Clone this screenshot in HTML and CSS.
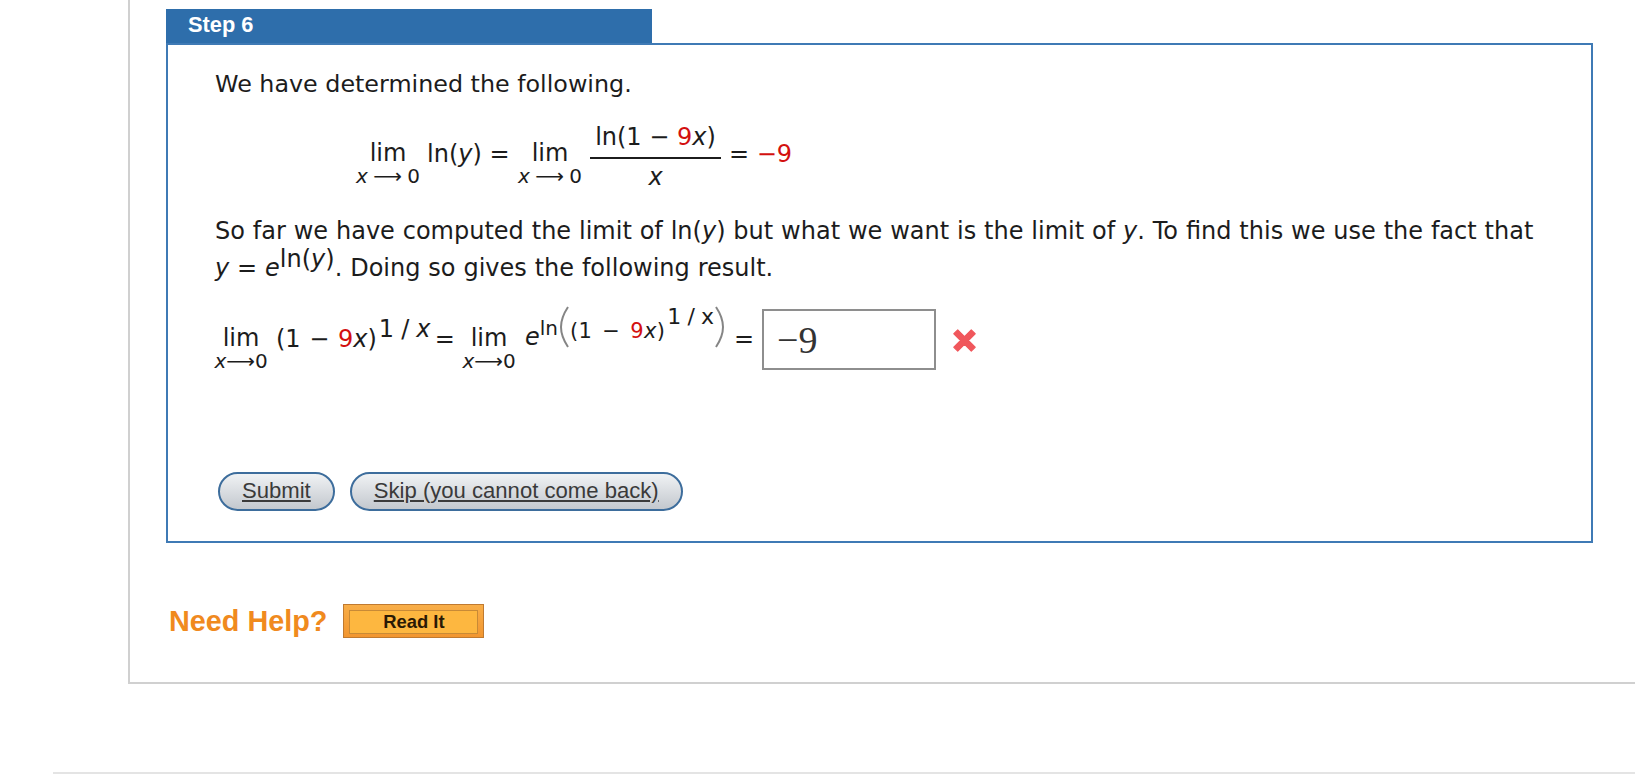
FILE: index.html
```html
<!DOCTYPE html>
<html lang="en">
<head>
<meta charset="utf-8">
<title>Step 6</title>
<link rel="stylesheet" href="styles.css">
</head>
<body>
<main class="panel">
  <section class="step">
    <h2 class="step-tab">Step 6</h2>
    <div class="step-box">
      <p class="line first">We have determined the following.</p>
      <div class="eq eq-one">
        <span class="lim lim-wide"><span>lim</span><span class="sub"><i>x</i> ⟶ 0</span></span>
        <span class="t t1">ln(<i>y</i>) =</span>
        <span class="lim lim-wide"><span>lim</span><span class="sub"><i>x</i> ⟶ 0</span></span>
        <span class="frac"><span class="num">ln(1 − <b class="red">9</b><i>x</i>)</span><span class="den"><i>x</i></span></span>
        <span class="t t2">= <b class="red">−9</b></span>
      </div>
      <p class="line para">So far we have computed the limit of ln(<i>y</i>) but what we want is the limit of <i>y</i>. To find this we use the fact that<br><i>y</i> = <i>e</i><sup class="sup">ln(<i>y</i>)</sup>. Doing so gives the following result.</p>
      <div class="eq eq-two">
        <span class="lim lim-tight"><span>lim</span><span class="sub"><i>x</i>⟶0</span></span>
        <span class="t t3">(1 − <b class="red">9</b><i>x</i>)<sup class="sup2">1 / <i>x</i></sup>=</span>
        <span class="lim lim-tight"><span>lim</span><span class="sub"><i>x</i>⟶0</span></span>
        <span class="t t4"><i>e</i><sup class="sup3">ln<svg class="paren" viewBox="0 0 10 42" preserveAspectRatio="none"><path d="M9 1C3 10 2 16 2 21s1 11 7 20"/></svg><span class="inner">(1 − <b class="red">9</b><i>x</i>)<sup class="sup4">1 / x</sup></span><svg class="paren" viewBox="0 0 10 42" preserveAspectRatio="none"><path d="M1 1c6 9 7 15 7 20s-1 11-7 20"/></svg></sup></span>
        <span class="t t5">=</span>
        <span class="answer">−9</span>
        <svg class="cross" viewBox="0 0 24 24" role="img" aria-label="Incorrect"><path d="M2.500 6 6 2.500l6 6 6-6L21.500 6l-6 6 6 6-3.500 3.500-6-6-6 6L2.500 18l6-6z"/></svg>
      </div>
      <div class="actions">
        <a class="btn" href="#">Submit</a>
        <a class="btn" href="#">Skip (you cannot come back)</a>
      </div>
    </div>
  </section>
  <div class="help">
    <span class="need">Need Help?</span>
    <a class="read" href="#"><span>Read It</span></a>
  </div>
</main>
<div class="foot"></div>
</body>
</html>
```
FILE: styles.css
```css
html, body { margin: 0; padding: 0; background: #fff; height: 774px; overflow: hidden; }
body { font-family: "DejaVu Sans", Verdana, sans-serif; color: #1c1c1c; }
i { font-style: italic; }
.red { color: #d3100f; font-weight: normal; }
.panel { margin-left: 128px; height: 673px; padding: 9px 0 0 36px; border-left: 2px solid #d0d0d0; border-bottom: 2px solid #d0d0d0; }
.foot { margin: 88px 0 0 53px; border-top: 2px solid #e4e4e4; }
.step-tab { margin: 0; width: 464px; height: 35px; padding-left: 22px; background: #2e6eab; color: #fff; font: bold 21.8px/32px "Liberation Sans", Arial, sans-serif; }
.step-box { height: 496px; border: 2px solid #3f7ab5; padding-left: 47px; margin-top: -1px; width: 1376px; }
.line { margin: 0; font-size: 24px; line-height: 37.5px; }
.first { padding-top: 21px; font-size: 23.8px; }
.para { padding-top: 9px; word-spacing: 0.25px; }
.eq { display: flex; font-size: 24px; line-height: 30px; white-space: nowrap; }
.eq-one { padding: 17px 0 0 141px; height: 83px; align-items: flex-start; }
.eq-two { padding: 21px 0 0 0; height: 163px; align-items: flex-start; }
.lim { display: inline-flex; flex-direction: column; align-items: center; }
.lim span:first-child { line-height: 30px; padding-top: 17px; }
.sub { font-size: 20px; line-height: 24px; margin-top: -4px; }
.lim-wide .sub { word-spacing: -1px; }
.lim-wide { width: 64px; }
.lim-tight { width: 52px; }
.lim-tight span:first-child { padding-top: 14px; }
.t1 { margin-left: 7px; padding-top: 18px; width: 91px; }
.frac { display: inline-flex; flex-direction: column; align-items: center; margin-left: 8px; width: 131px; }
.num { line-height: 30px; border-bottom: 2px solid #1c1c1c; width: 100%; text-align: center; padding: 1px 0 5px; }
.den { line-height: 30px; padding-top: 3px; }
.t2 { margin-left: 8px; padding-top: 18px; }
.sup { font-size: 24px; line-height: 0; vertical-align: 9px; }
.t3 { margin-left: 9px; padding-top: 15px; width: 187px; word-spacing: 1px; }
.sup2 { font-size: 24px; line-height: 0; vertical-align: 10px; margin: 0 5px 0 2px; letter-spacing: -0.8px; }
.t4 { margin-left: 10px; padding-top: 8px; width: 209px; }
.sup3 { font-size: 20px; line-height: 0; vertical-align: 10px; }
.paren { width: 10px; height: 42px; margin: -19px 1px; vertical-align: 5.500px; }
.paren path { fill: none; stroke: #858585; stroke-width: 2; }
.inner { font-size: 21px; vertical-align: -3px; line-height: 0; word-spacing: 3px; letter-spacing: 0.35px; }
.sup4 { font-size: 22px; line-height: 0; vertical-align: 14px; margin-left: 2px; letter-spacing: -0.4px; word-spacing: 0; }
.t5 { padding-top: 15px; width: 28px; }
.answer { width: 174px; height: 61px; box-sizing: border-box; border: 2px solid #8e8e8e; padding: 12px 0 0 13px; font: 38px/34px "Liberation Serif", serif; color: #333; }
.cross { width: 27px; height: 27px; margin: 18px 0 0 15px; }
.cross path { fill: #f0575c; stroke: #f0575c; stroke-width: 1; stroke-linejoin: round; }
.actions { display: flex; gap: 15px; padding: 0 0 0 3px; }
.btn { display: block; height: 39px; box-sizing: border-box; padding: 0 22px; border: 2px solid #3d6d9c; border-radius: 20px; background: linear-gradient(#f0f2f4, #c3c8ce); color: #3a3a3a; font: 22.1px/34px "Liberation Sans", Arial, sans-serif; }
.help { display: flex; align-items: center; margin-top: 61px; }
.need { color: #f08a1e; font: bold 28.8px/32px "Liberation Sans", Arial, sans-serif; margin-left: 3px; }
.read { margin-left: 16px; width: 141px; height: 34px; box-sizing: border-box; border: 1px solid #c07a30; padding: 5px; background: linear-gradient(#f8ae48, #f29630); display: block; text-decoration: none; }
.read span { display: block; height: 22px; background: #fdb740; border: 1px solid #c88a36; text-align: center; color: #2a1a05; font: bold 18.4px/22px "Liberation Sans", Arial, sans-serif; }
```
